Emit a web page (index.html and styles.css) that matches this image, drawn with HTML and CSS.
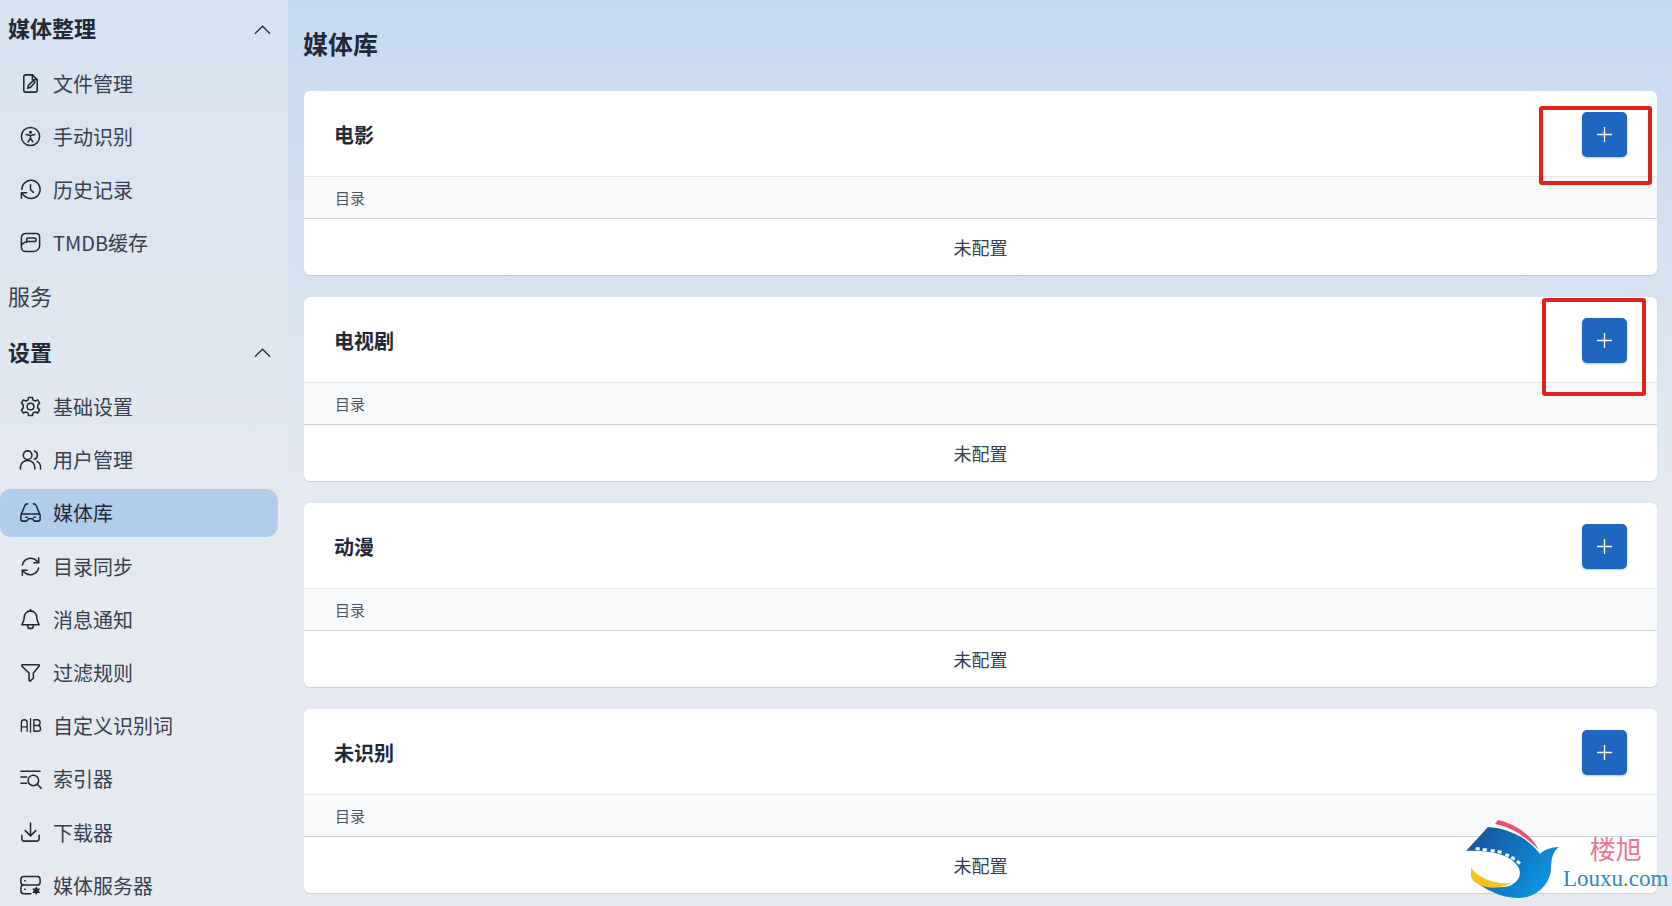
FILE: index.html
```html
<!DOCTYPE html>
<html lang="zh-CN">
<head>
<meta charset="utf-8">
<title>媒体库</title>
<link rel="stylesheet" href="styles.css">
</head>
<body>
<div class="app">
  <aside class="sidebar">
    <div class="group-title"><span>媒体整理</span><svg class="chev" viewBox="0 0 18 10"><path d="M1 9l8-8 8 8"/></svg></div>
    <a class="item"><svg class="ic" viewBox="0 0 24 24"><path d="M14 3H7a2 2 0 0 0-2 2v14a2 2 0 0 0 2 2h10a2 2 0 0 0 2-2V8z"/><path d="M14 3v5h5"/><path d="M9 17l.8-3 4.200-4.200a1.400 1.400 0 0 1 2 2L11.800 16z"/></svg><span>文件管理</span></a>
    <a class="item"><svg class="ic" viewBox="0 0 24 24"><circle cx="12" cy="12" r="9.500"/><circle cx="12" cy="7.500" r=".8"/><path d="M7.500 10l4.500 1 4.500-1M12 11v3M12 14l-2.500 3.500M12 14l2.500 3.500"/></svg><span>手动识别</span></a>
    <a class="item"><svg class="ic" viewBox="0 0 24 24"><path d="M3 12a9.500 9.500 0 1 1 3.200 7"/><path d="M12 7v5l3 3"/><path d="M2.500 21v-5.500H8"/><path d="M3 16l3.500 3.500"/></svg><span>历史记录</span></a>
    <a class="item"><svg class="ic" viewBox="0 0 24 24"><path d="M7 2.500h11a3.500 3.500 0 0 1 3.500 3.500v9a6.500 6.500 0 0 1-6.500 6.500H7A4.500 4.500 0 0 1 2.500 17V7A4.500 4.500 0 0 1 7 2.500z"/><path d="M8 12V9a1.800 1.800 0 0 1 1.800-1.800H16a1.900 1.900 0 0 1 0 3.800H9c-2 0-4 1-6 3"/></svg><span>TMDB缓存</span></a>
    <div class="group-plain">服务</div>
    <div class="group-title second"><span>设置</span><svg class="chev" viewBox="0 0 18 10"><path d="M1 9l8-8 8 8"/></svg></div>
    <a class="item"><svg class="ic" viewBox="0 0 24 24"><path d="M10 2.500h4l.7 2.800 2.200 1 2.600-1.200 2 3.400-2 2a7 7 0 0 1 0 3l2 2-2 3.400-2.600-1.200-2.200 1L14 21.500h-4l-.7-2.800-2.200-1-2.600 1.200-2-3.400 2-2a7 7 0 0 1 0-3l-2-2 2-3.400 2.600 1.200 2.200-1z"/><circle cx="12" cy="12" r="3.500"/></svg><span>基础设置</span></a>
    <a class="item"><svg class="ic" viewBox="0 0 24 24"><circle cx="9" cy="7.500" r="4.500"/><path d="M1.500 22v-2a7 7 0 0 1 7-7h1a7 7 0 0 1 7 7v2"/><path d="M16 3.200a4.500 4.500 0 0 1 0 8.600M19 14a7 7 0 0 1 3.500 6v2"/></svg><span>用户管理</span></a>
    <a class="item active"><svg class="ic" viewBox="0 0 24 24"><path d="M2 14.500V19a2 2 0 0 0 2 2h4l2-2.500h4l2 2.500h4a2 2 0 0 0 2-2v-4.500a1 1 0 0 0-1-1H3a1 1 0 0 0-1 1z"/><path d="M2.500 13.500L6 5a3 3 0 0 1 3-2M21.500 13.500L18 5a3 3 0 0 0-3-2"/><path d="M7 17h1.500M15.500 17H17"/></svg><span>媒体库</span></a>
    <a class="item"><svg class="ic" viewBox="0 0 24 24"><path d="M3.500 10.500A9 9 0 0 1 19 6.500l1.500 1.500"/><path d="M20.500 3v5h-5"/><path d="M20.500 13.500A9 9 0 0 1 5 17.500L3.500 16"/><path d="M3.500 21v-5h5"/></svg><span>目录同步</span></a>
    <a class="item"><svg class="ic" viewBox="0 0 24 24"><path d="M12 3a6.500 6.500 0 0 0-6.500 6.500c0 4.500-2 6-2.500 8h18c-.5-2-2.500-3.500-2.500-8A6.500 6.500 0 0 0 12 3z"/><path d="M9 17.500v1a3 3 0 0 0 6 0v-1M12 1.500V3"/></svg><span>消息通知</span></a>
    <a class="item"><svg class="ic" viewBox="0 0 24 24"><path d="M3.500 4h17a.8.800 0 0 1 .6 1.300L15 12.500V18l-3.500 3-1-.8v-7.700L2.900 5.300A.8.800 0 0 1 3.500 4z"/></svg><span>过滤规则</span></a>
    <a class="item"><svg class="ic ic-thin" viewBox="0 0 24 24"><path d="M2.500 18V9a3 3 0 0 1 6 0v9M2.500 13.500h6M12 5v14M15.500 6H19a2.800 2.800 0 0 1 0 6h-3.500zM15.500 12h4a3 3 0 0 1 0 6h-4z"/></svg><span>自定义识别词</span></a>
    <a class="item"><svg class="ic" viewBox="0 0 24 24"><path d="M2 4.500h20M2 10.500h6M2 17h6"/><circle cx="15" cy="14" r="5.500"/><path d="M19 18l4 4"/></svg><span>索引器</span></a>
    <a class="item"><svg class="ic" viewBox="0 0 24 24"><path d="M12 2v13M6.500 10l5.500 5.500 5.500-5.500"/><path d="M3 15v3.500A2.500 2.500 0 0 0 5.500 21h13a2.500 2.500 0 0 0 2.500-2.500V15"/></svg><span>下载器</span></a>
    <a class="item"><svg class="ic" viewBox="0 0 24 24"><path d="M12.500 20.500H5a3 3 0 0 1-3-3v-3a3 3 0 0 1 3-3h14a3 3 0 0 0 3-3V5.500a3 3 0 0 0-3-3H5a3 3 0 0 0-3 3v3a3 3 0 0 0 3 3"/><path d="M6 7h.500M6 16h.500"/><path class="fill" d="M18 13l1.300 2.200H22l-1.300 2.300 1.300 2.300h-2.700L18 22l-1.300-2.200H14l1.300-2.300L14 15.200h2.700z"/></svg><span>媒体服务器</span></a>
  </aside>
  <main class="main">
    <h1 class="page-title">媒体库</h1>
    <section class="card">
      <header class="card-head"><h2>电影</h2><button class="add"><svg viewBox="0 0 16 16"><path d="M8 1v14M1 8h14"/></svg></button></header>
      <div class="th">目录</div>
      <div class="td">未配置</div>
      <div class="mark mark-a"></div>
    </section>
    <section class="card">
      <header class="card-head"><h2>电视剧</h2><button class="add"><svg viewBox="0 0 16 16"><path d="M8 1v14M1 8h14"/></svg></button></header>
      <div class="th">目录</div>
      <div class="td">未配置</div>
      <div class="mark mark-b"></div>
    </section>
    <section class="card">
      <header class="card-head"><h2>动漫</h2><button class="add"><svg viewBox="0 0 16 16"><path d="M8 1v14M1 8h14"/></svg></button></header>
      <div class="th">目录</div>
      <div class="td">未配置</div>
    </section>
    <section class="card">
      <header class="card-head"><h2>未识别</h2><button class="add"><svg viewBox="0 0 16 16"><path d="M8 1v14M1 8h14"/></svg></button></header>
      <div class="th">目录</div>
      <div class="td">未配置</div>
    </section>
  </main>
</div>
<div class="watermark">
  <svg class="wm-logo" viewBox="0 0 94 80">
    <defs><linearGradient id="wg" x1="0" y1="0" x2="1" y2="0.6"><stop offset="0" stop-color="#1a4c98"/><stop offset="1" stop-color="#0c95de"/></linearGradient></defs>
    <path fill="#e8506f" d="M32 1C50 5 66 17 73 31 62 20 50 11 37 7 34 6 32 6 29 5z"/>
    <path fill="url(#wg)" d="M22 8C40 9 62 18 74 35 78 31 85 28 93 28 87 32 85 40 85 50 84 66 70 79 52 79 35 79 18 70 6 60 20 68 38 71 47 65 55 60 56 52 50 45 42 36 26 31 0 32z"/>
    <path fill="#fff" d="M10 28l4 .5-.6 3-4-.5zM17 29l4 .5-.6 3-4-.5zM25 30l4 .5-.6 3-4-.5zM32 31l4 1-.8 3-4-1zM40 34l3.500 1.500-1.200 2.800-3.500-1.500zM46 37l3.500 1.800-1.500 2.700-3.500-1.800zM52 41l3 2.500-2 2.300-3-2.500z"/>
    <path fill="#f8c21c" d="M5 48C10 58 28 66 46 64 38 68 28 70 20 68 12 66 6 62 5 57z"/>
  </svg>
  <div class="wm-text"><div class="wm-cn">楼旭</div><div class="wm-en">Louxu<i>.</i>com</div></div>
</div>
</body>
</html>
```
FILE: styles.css
```css
* { box-sizing: border-box; }
html, body { margin: 0; height: 906px; overflow: hidden; }
body {
  font-family: "Noto Sans CJK SC", "Noto Sans", sans-serif;
  color: #1f2937;
  background: linear-gradient(180deg, #c5daf0 0, #e5e9f0 500px);
}
.app { display: flex; height: 906px; overflow: hidden; }

.sidebar {
  width: 288px;
  flex: none;
  padding-top: 4px;
  background: linear-gradient(180deg, #d6e3f0 0, #e5e9f0 500px);
  overflow: hidden;
}
.group-title {
  display: flex;
  align-items: center;
  justify-content: space-between;
  height: 51px;
  margin-bottom: 4px;
  padding: 0 17px 0 8px;
  font-size: 22px;
  font-weight: 700;
  color: #1f2937;
}
.group-title span { margin-bottom: 5px; }
.group-title.second { margin-bottom: 3.800px; }
.group-plain {
  display: flex;
  align-items: center;
  height: 56px;
  padding: 0 0 10px 8px;
  font-size: 22px;
  color: #374151;
}
.chev { width: 17px; height: 10px; fill: none; stroke: #1f2937; stroke-width: 1.3; }
.item {
  display: flex;
  align-items: center;
  width: 278px;
  height: 48px;
  margin-bottom: 5.200px;
  padding: 0 0 0 18.500px;
  gap: 11.500px;
  font-size: 20px;
  color: #374151;
  border-radius: 0 12px 12px 0;
}
.item.active { background: #b0cdeb; border-radius: 10px 12px 12px 10px; color: #1f2937; }
.ic {
  width: 23px;
  height: 23px;
  flex: none;
  fill: none;
  stroke: #1f2937;
  stroke-width: 1.600;
  stroke-linecap: round;
  stroke-linejoin: round;
}
.ic .fill { fill: #1f2937; stroke: none; }
.ic-thin { stroke-width: 1.400; }

.main { flex: 1; padding: 0 15px 0 16px; min-width: 0; }
.page-title { margin: 0 0 0 -1px; height: 91px; padding-top: 23px; font-size: 25px; line-height: 40px; font-weight: 700; color: #1f2937; }
.card {
  position: relative;
  height: 184px;
  margin-bottom: 22px;
  background: #fff;
  border-radius: 6px;
  box-shadow: 0 1px 1px rgba(0, 0, 0, .1);
}
.card-head {
  display: flex;
  align-items: center;
  justify-content: space-between;
  height: 86px;
  padding: 0 30px 0 30px;
  border-bottom: 1px solid #e5e7eb;
}
.card-head h2 { margin: 2px 0 0; font-size: 20px; font-weight: 700; color: #1f2937; }
.add {
  width: 45px;
  height: 45px;
  margin-top: 1px;
  padding: 0;
  border: 0;
  border-radius: 5px;
  background: #1f66c1;
  box-shadow: 0 1px 2px rgba(0, 0, 0, .25);
  display: flex;
  align-items: center;
  justify-content: center;
}
.add svg { width: 17px; height: 17px; fill: none; stroke: #fff; stroke-width: 1.300; }
.th {
  height: 42px;
  padding-left: 31px;
  display: flex;
  align-items: center;
  font-size: 15px;
  color: #4b5563;
  background: #f8f9fb;
  border-bottom: 1px solid #d1d5db;
}
.td {
  height: 56px;
  display: flex;
  align-items: center;
  justify-content: center;
  font-size: 18px;
  color: #374151;
}
.mark { position: absolute; border: 4px solid #e0221c; border-radius: 3px; pointer-events: none; }
.mark-a { left: 1235px; top: 15px; width: 113px; height: 79px; }
.mark-b { left: 1238px; top: 1px; width: 104px; height: 98px; }

.watermark { position: absolute; left: 1466px; top: 819px; display: flex; }
.wm-logo { width: 94px; height: 80px; display: block; flex: none; }
.wm-text { margin-left: 3px; padding-top: 13px; text-align: center; font-family: "Liberation Serif", serif; }
.wm-cn { font-family: "Noto Sans CJK SC", sans-serif; font-size: 26px; line-height: 32px; color: #e8607c; opacity: .85; }
.wm-en { font-size: 23px; line-height: 29px; color: #2a8ac9; white-space: nowrap; }
.wm-en i { color: #d0455f; font-style: normal; }
```
